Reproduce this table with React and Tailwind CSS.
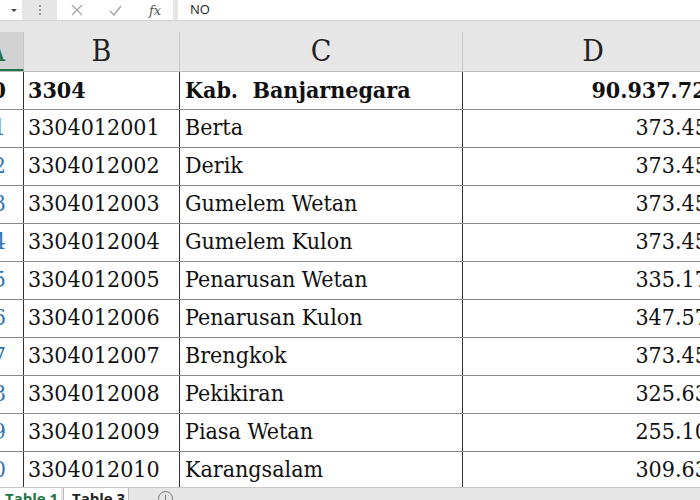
import React from "react";

const rows = [
  { a: "0", code: "3304", name: "Kab.  Banjarnegara", value: "90.937.724", bold: true },
  { a: "1", code: "3304012001", name: "Berta", value: "373.452" },
  { a: "2", code: "3304012002", name: "Derik", value: "373.452" },
  { a: "3", code: "3304012003", name: "Gumelem Wetan", value: "373.452" },
  { a: "4", code: "3304012004", name: "Gumelem Kulon", value: "373.452" },
  { a: "5", code: "3304012005", name: "Penarusan Wetan", value: "335.171" },
  { a: "6", code: "3304012006", name: "Penarusan Kulon", value: "347.571" },
  { a: "7", code: "3304012007", name: "Brengkok", value: "373.452" },
  { a: "8", code: "3304012008", name: "Pekikiran", value: "325.631" },
  { a: "9", code: "3304012009", name: "Piasa Wetan", value: "255.101" },
  { a: "0", code: "3304012010", name: "Karangsalam", value: "309.631" },
];

const serif = "font-['DejaVu_Serif_Condensed','DejaVu_Serif',serif]";

function FormulaBar() {
  return (
    <div className="flex h-[21px] shrink-0 bg-[#e6e6e6] border-b border-[#d4d4d4]">
      <div className="flex w-[22px] h-[20px] items-center justify-end bg-white pr-[5px]">
        <div className="h-0 w-0 border-x-[3px] border-t-[3px] border-x-transparent border-t-[#444]" />
      </div>
      <div className="flex w-[35px] items-center justify-center">
        <div className="flex flex-col gap-[2px]">
          <span className="h-[2px] w-[2px] bg-[#9a9a9a]" />
          <span className="h-[2px] w-[2px] bg-[#9a9a9a]" />
          <span className="h-[2px] w-[2px] bg-[#9a9a9a]" />
        </div>
      </div>
      <div className="flex w-[116px] h-[20px] items-center bg-white pl-[14px]">
        <svg width="12" height="12" viewBox="0 0 12 12" className="mr-[26px]">
          <path d="M1 1 L11 11 M11 1 L1 11" stroke="#a6a6a6" strokeWidth="1.3" fill="none" />
        </svg>
        <svg width="13" height="11" viewBox="0 0 13 11" className="mr-[27px]">
          <path d="M1 6 L5 10 L12 1" stroke="#a6a6a6" strokeWidth="1.5" fill="none" />
        </svg>
        <span className="font-['DejaVu_Serif',serif] italic text-[13px] leading-none text-[#555]">fx</span>
      </div>
      <div className="w-[5px]" />
      <div className="flex flex-1 h-[20px] items-center bg-white pl-[12px] font-['Open_Sans',sans-serif] text-[13px] text-[#222]">
        NO
      </div>
    </div>
  );
}

function Header() {
  return (
    <>
      <div className="h-[11px] shrink-0 bg-[#e6e6e6]" />
      <div className={`flex h-[40px] shrink-0 bg-[#e6e6e6] border-b border-[#bcbcbc] ${serif} text-[30px] text-[#222]`}>
        <div className="flex w-[24px] shrink-0 items-end justify-end overflow-hidden bg-[#d2d2d2] border-b-2 border-[#217346] border-r border-r-[#c6c6c6] pr-[18px] pb-[3px] text-[#217346] leading-none">
          A
        </div>
        <div className="flex w-[156px] shrink-0 items-end justify-center border-r border-[#c6c6c6] pb-[5px] leading-none">B</div>
        <div className="flex w-[283px] shrink-0 items-end justify-center border-r border-[#c6c6c6] pb-[5px] leading-none">C</div>
        <div className="flex w-[260px] shrink-0 items-end justify-center pb-[5px] leading-none">D</div>
      </div>
    </>
  );
}

function Row({ r }) {
  const weight = r.bold ? "font-bold" : "font-normal";
  return (
    <div className={`flex h-[38px] shrink-0 border-b border-[#8a8a8a] ${serif} text-[23px] leading-none text-[#111] ${weight}`}>
      <div
        className={`flex w-[24px] shrink-0 items-center justify-end overflow-hidden border-r border-[#333] pr-[17px] pb-[2px] ${
          r.bold ? "text-[#111]" : "text-[#2f75b5]"
        }`}
      >
        {r.a}
      </div>
      <div className="flex w-[156px] shrink-0 items-center border-r border-[#333] pl-[4px] pb-[2px] whitespace-pre">{r.code}</div>
      <div className="flex w-[283px] shrink-0 items-center border-r border-[#333] pl-[5px] pb-[2px] whitespace-pre">{r.name}</div>
      <div className="flex w-[262px] shrink-0 items-center justify-end pr-[4px] pb-[2px]">{r.value}</div>
    </div>
  );
}

function Tabs() {
  return (
    <div className="flex h-[13px] shrink-0 overflow-hidden bg-[#e6e6e6] border-t border-[#c8c8c8] font-['Open_Sans',sans-serif] text-[15px] font-bold leading-none">
      <div className="flex w-[61px] shrink-0 items-start bg-white pl-[5px] pt-[3px] text-[#217346]">Table 1</div>
      <div className="ml-[2px] flex w-[66px] shrink-0 items-start bg-white border-x border-[#bdbdbd] pl-[8px] pt-[3px] text-[#222]">Table 3</div>
      <div className="ml-[29px] mt-[3px] flex h-[15px] w-[15px] shrink-0 items-start justify-center rounded-full border border-[#7a7a7a]">
        <div className="mt-[3px] h-[8px] w-px bg-[#7a7a7a]" />
      </div>
    </div>
  );
}

export default function App() {
  return (
    <div className="flex h-[500px] w-[700px] flex-col overflow-hidden bg-white">
      <FormulaBar />
      <Header />
      <div className="flex flex-1 flex-col overflow-hidden">
        {rows.map((r, i) => (
          <Row key={i} r={r} />
        ))}
      </div>
      <Tabs />
    </div>
  );
}
